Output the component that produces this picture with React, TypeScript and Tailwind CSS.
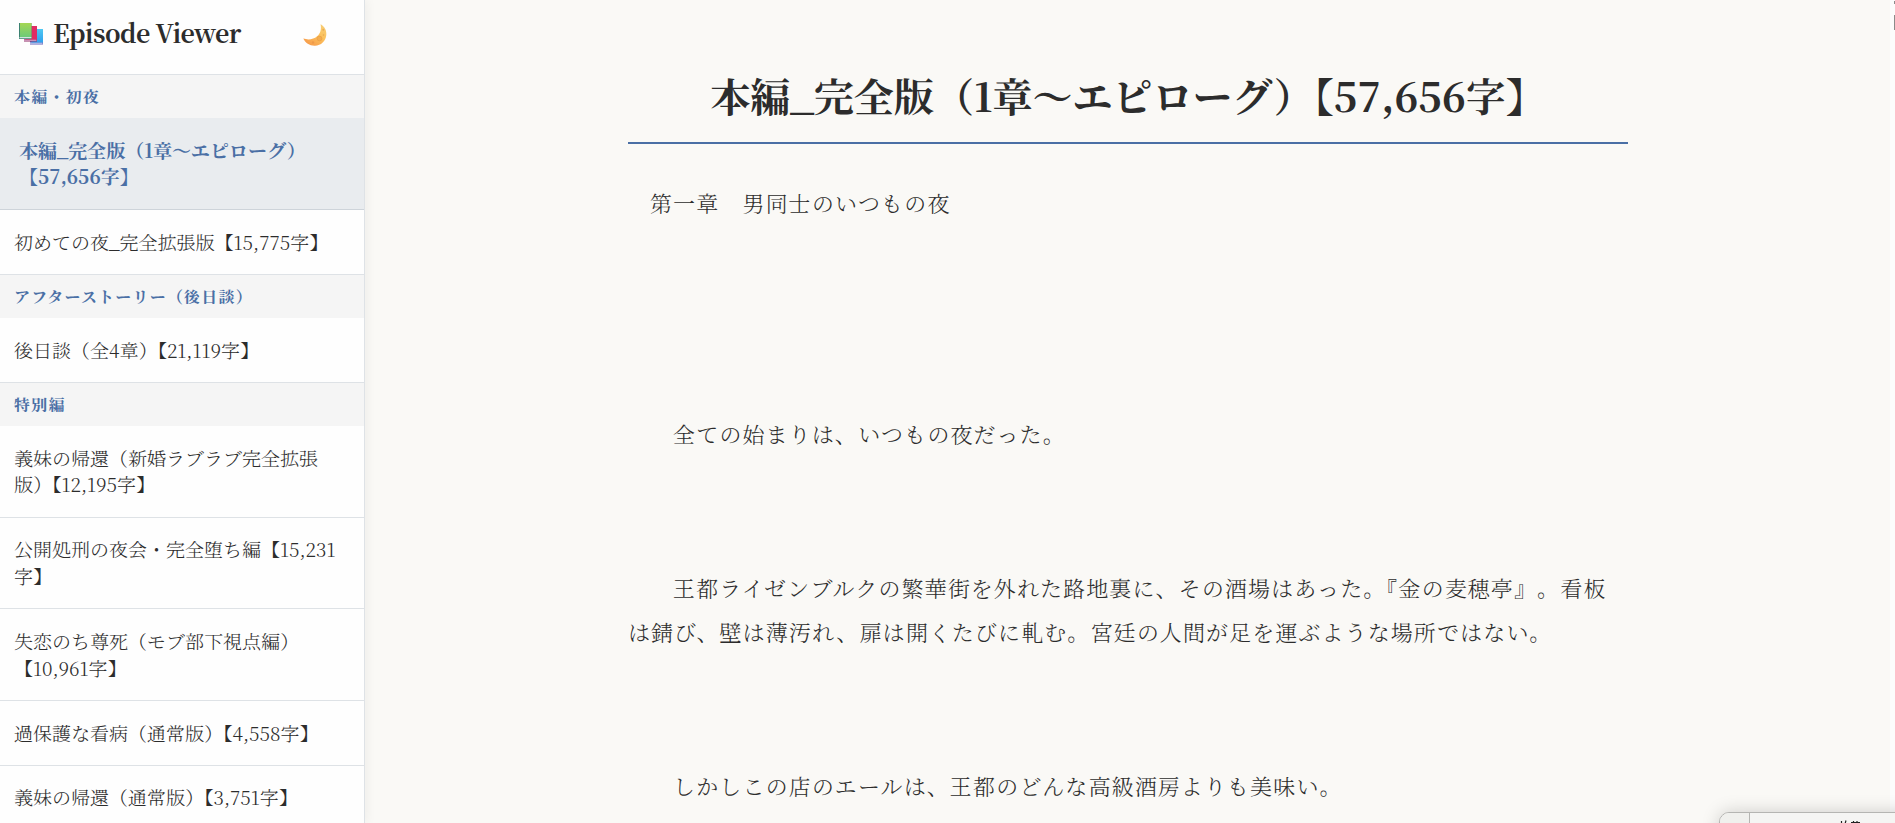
import React from 'react';

type Episode = { lines: string[]; active?: boolean };
type Group = { title: string; episodes: Episode[] };

const groups: Group[] = [
  {
    title: '本編・初夜',
    episodes: [
      { lines: ['本編_完全版（1章〜エピローグ）', '【57,656字】'], active: true },
      { lines: ['初めての夜_完全拡張版【15,775字】'] },
    ],
  },
  { title: 'アフターストーリー（後日談）', episodes: [{ lines: ['後日談（全4章）【21,119字】'] }] },
  {
    title: '特別編',
    episodes: [
      { lines: ['義妹の帰還（新婚ラブラブ完全拡張', '版）【12,195字】'] },
      { lines: ['公開処刑の夜会・完全堕ち編【15,231', '字】'] },
      { lines: ['失恋のち尊死（モブ部下視点編）', '【10,961字】'] },
      { lines: ['過保護な看病（通常版）【4,558字】'] },
      { lines: ['義妹の帰還（通常版）【3,751字】'] },
    ],
  },
];

function BooksIcon() {
  return (
    <svg className="h-[22px] w-[24px] shrink-0" viewBox="0 0 24 22">
      <defs>
        <linearGradient id="green" x1="0" y1="0" x2="0" y2="1">
          <stop offset="0" stopColor="#a5d653" />
          <stop offset="1" stopColor="#6ccb78" />
        </linearGradient>
        <linearGradient id="blue" x1="0" y1="0" x2="0" y2="1">
          <stop offset="0" stopColor="#4fc8f2" />
          <stop offset="1" stopColor="#2fa0ee" />
        </linearGradient>
      </defs>
      <path d="M11 6h13v15.500H11z" fill="#6661b8" />
      <path d="M11 19.500h12.500v1.200H11z" fill="#c9d7f4" />
      <path d="M12.500 6H24v13.500H12.500z" fill="url(#blue)" />
      <path d="M5 3h13v15.500H5z" fill="#8d2863" />
      <path d="M5 16.500h12.500v1.200H5z" fill="#e7bfdc" />
      <path d="M6.500 3H18v13.500H6.500z" fill="#e02c63" />
      <path d="M0 0h12.500v16H0z" fill="#3b8170" />
      <path d="M.5 14h12v1.300H.5z" fill="#cfe7dd" />
      <path d="M1 0h11.500v14H1z" fill="url(#green)" />
    </svg>
  );
}

function MoonIcon() {
  return (
    <svg className="h-[22px] w-[24px]" viewBox="0 0 24 22">
      <defs>
        <linearGradient id="moon" x1="1" y1="0" x2="0.300" y2="1">
          <stop offset="0" stopColor="#f6cf7b" />
          <stop offset="0.500" stopColor="#fcc25c" />
          <stop offset="1" stopColor="#f79d4c" />
        </linearGradient>
      </defs>
      <path
        d="M17.500.2C21.500 2.300 23.800 6.300 23.300 11c-.5 6-5.300 10.600-11.300 10.800C6.800 22 2.300 19.200.3 14.600c5 1.600 10.200.9 13.800-2.300C17.600 9.300 18.600 4.800 17.500.2z"
        fill="url(#moon)"
      />
      <circle cx="16.500" cy="14.500" r="2.400" fill="#f3ad50" stroke="#e89a43" strokeWidth=".6" />
      <circle cx="20.300" cy="5.800" r="1" fill="#e9ab55" />
      <circle cx="10" cy="18.500" r="1.200" fill="#ee9a49" />
      <circle cx="20.500" cy="11" r=".8" fill="#e9a850" />
    </svg>
  );
}

function Paragraph({ children, className }: { children: React.ReactNode; className: string }) {
  return <p className={`whitespace-nowrap indent-[22px] text-[22px] leading-[44px] tracking-[1.1px] ${className}`}>{children}</p>;
}

export default function App() {
  return (
    <div
      lang="ja"
      className="relative flex h-[823px] w-[1895px] overflow-hidden bg-[#faf9f6] font-['Noto_Serif_JP','Noto_Serif_CJK_JP','Liberation_Serif','Noto_Sans_CJK_JP',serif] font-light text-[#2c2c2c]"
    >
      <aside className="relative w-[365px] shrink-0 overflow-hidden border-r border-[#dee2e6] bg-[#fefefe] shadow-[2px_0_10px_rgba(0,0,0,0.05)]">
        <header className="flex h-[75px] items-start border-b border-[#dee2e6] pt-[15px] pr-[37px] pl-[19px]">
          <div className="mt-[8px] flex">
            <BooksIcon />
          </div>
          <h1 className="ml-[10px] text-[25px] leading-[34px] font-bold tracking-[-0.550px] whitespace-nowrap">Episode Viewer</h1>
          <div className="mt-[9px] ml-auto flex">
            <MoonIcon />
          </div>
        </header>
        <nav>
          {groups.map((group) => (
            <section key={group.title}>
              <h2 className="h-[43.200px] bg-[#f5f5f5] pl-[14px] text-[16px] leading-[43.200px] font-bold tracking-[1.200px] whitespace-nowrap text-[#4a6fa5]">
                {group.title}
              </h2>
              {group.episodes.map((episode) => (
                <div
                  key={episode.lines[0]}
                  className={
                    episode.active
                      ? 'border-b border-[#ced4da] bg-[#e9ecef] py-[18.600px] pl-[19px] text-[19px] leading-[26.700px] font-bold text-[#4a6fa5]'
                      : 'border-b border-[#dee2e6] pt-[18.800px] pb-[18.400px] pl-[14px] text-[19px] leading-[26.700px]'
                  }
                >
                  {episode.lines.map((line) => (
                    <div key={line} className="whitespace-nowrap">
                      {line}
                    </div>
                  ))}
                </div>
              ))}
            </section>
          ))}
        </nav>
      </aside>

      <main className="flex-1">
        <article className="ml-[263px] w-[1000px]">
          <h1 className="h-[144px] border-b-2 border-[#4a6fa5] pt-[67px] text-center text-[40px] leading-[56px] font-bold whitespace-nowrap">
            本編_完全版（1章〜エピローグ）【57,656字】
          </h1>
          <Paragraph className="mt-[37px]">第一章　男同士のいつもの夜</Paragraph>
          <Paragraph className="mt-[187px]">　全ての始まりは、いつもの夜だった。</Paragraph>
          <Paragraph className="mt-[110px]">
            {'　王都ライゼンブルクの繁華街を外れた路地裏に、その酒場はあった。『金の麦穂亭'}
            <span className="[text-spacing-trim:space-all]">{'』。'}</span>
            看板
            <br />
            は錆び、壁は薄汚れ、扉は開くたびに軋む。宮廷の人間が足を運ぶような場所ではない。
          </Paragraph>
          <Paragraph className="mt-[110px]">　しかしこの店のエールは、王都のどんな高級酒房よりも美味い。</Paragraph>
        </article>
      </main>

      <div className="flex w-[5px] shrink-0 flex-col items-end bg-[#fcfcfc]">
        <div className="mt-px h-[3px] w-px bg-[#8b8b8b]" />
        <div className="mt-[11px] h-[15px] w-px bg-[#8b8b8b]" />
      </div>

      <div className="absolute top-[812px] left-[1719px] flex h-[60px] w-[200px] rounded-tl-[10px] border border-[#b5b5b2] bg-[#f5f5f3] shadow-[0_0_18px_rgba(0,0,0,0.18)]">
        <div className="w-[30px] rounded-tl-[9px] border-r border-[#b5b5b2] bg-[#f0f0ed]" />
        <svg className="mt-[7px] ml-[90px] h-[4px] w-[22px]" viewBox="0 0 22 4">
          <path d="M1.500 1v3M6 .5l-1 3.500M11 2.500h9M13.500 1v3M17 1v3" stroke="#222" strokeWidth="1.200" fill="none" />
        </svg>
      </div>
    </div>
  );
}
